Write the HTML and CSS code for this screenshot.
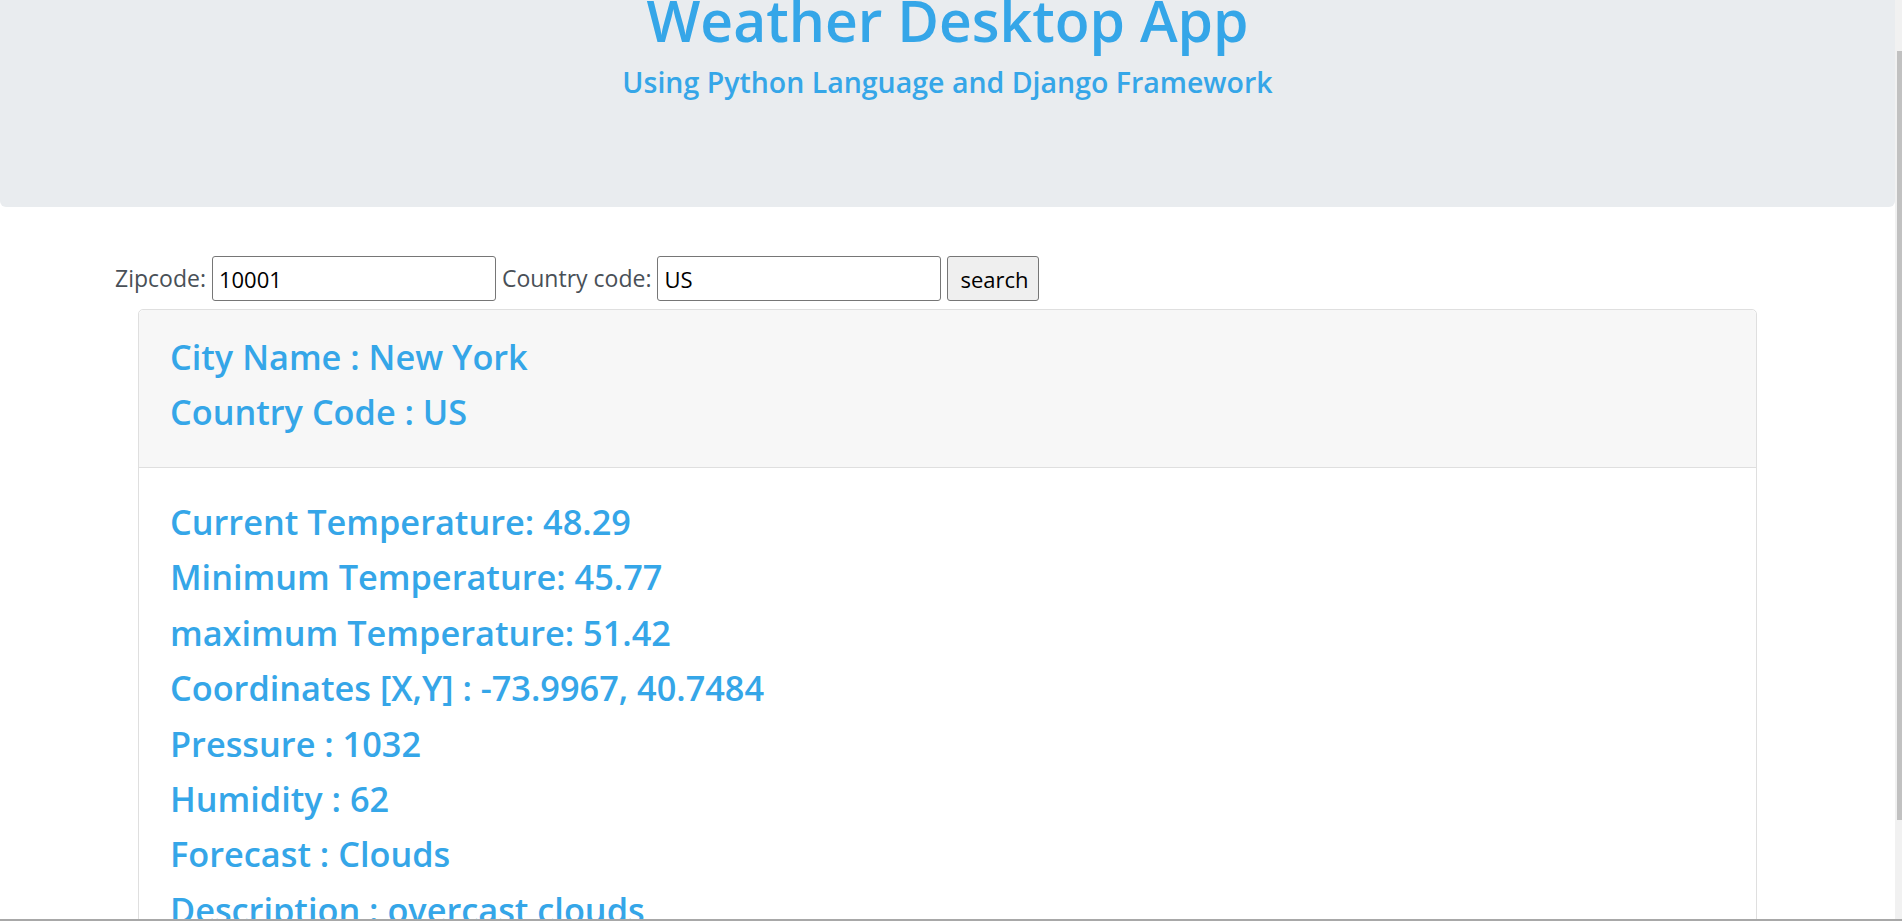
FILE: index.html
```html
<!DOCTYPE html>
<html lang="en">
<head>
<meta charset="utf-8">
<title>Weather Desktop App</title>
<link rel="stylesheet" href="styles.css">
</head>
<body>
<div class="page">
  <header class="jumbotron">
    <h1 class="title">Weather Desktop App</h1>
    <h2 class="subtitle">Using Python Language and Django Framework</h2>
  </header>

  <form class="search-form">
    <label class="form-label" for="zip">Zipcode:</label>
    <input class="form-input" id="zip" type="text" value="10001">
    <label class="form-label" for="cc">Country code:</label>
    <input class="form-input" id="cc" type="text" value="US">
    <button class="form-button" type="button">search</button>
  </form>

  <section class="card">
    <div class="card-header">
      <h3 class="line">City Name : New York</h3>
      <h3 class="line">Country Code : US</h3>
    </div>
    <div class="card-body">
      <h3 class="line">Current Temperature: 48.29</h3>
      <h3 class="line">Minimum Temperature: 45.77</h3>
      <h3 class="line">maximum Temperature: 51.42</h3>
      <h3 class="line">Coordinates [X,Y] : -73.9967, 40.7484</h3>
      <h3 class="line">Pressure : 1032</h3>
      <h3 class="line">Humidity : 62</h3>
      <h3 class="line">Forecast : Clouds</h3>
      <h3 class="line">Description : overcast clouds</h3>
    </div>
  </section>
</div>

<div class="scrollbar"><div class="scrollbar-thumb"></div></div>
<div class="window-edge"></div>
</body>
</html>
```

FILE: styles.css
```css
html, body {
  margin: 0;
  padding: 0;
  background: #ffffff;
  overflow: hidden;
}

body {
  font-family: "Open Sans", "Noto Sans", sans-serif;
  color: #495057;
}

.page {
  width: 1895px;
}

.jumbotron {
  background: #e9ecef;
  border-radius: 0 0 6px 6px;
  padding: 0 0 109px;
  text-align: center;
  color: #35a6e8;
}

.title {
  margin: -16px 0 0;
  font-size: 57px;
  line-height: 72px;
  font-weight: 600;
}

.subtitle {
  margin: 10px 0 0;
  font-size: 28.5px;
  line-height: 32px;
  font-weight: 600;
}

.search-form {
  display: flex;
  align-items: center;
  gap: 6px;
  margin: 49px 0 0 115px;
  height: 45px;
}

.form-label {
  font-size: 23px;
  line-height: 45px;
  color: #495057;
}

.form-input {
  box-sizing: border-box;
  width: 284px;
  height: 45px;
  border: 1px solid #767676;
  border-radius: 3px;
  padding: 0 6px;
  font-family: "Open Sans", "Noto Sans", sans-serif;
  font-size: 22px;
  color: #000000;
  background: #ffffff;
}

.form-button {
  box-sizing: border-box;
  width: 92px;
  height: 45px;
  border: 1px solid #767676;
  border-radius: 3px;
  padding: 0 12px;
  font-family: "Open Sans", "Noto Sans", sans-serif;
  font-size: 22px;
  color: #000000;
  background: #efefef;
}

.card {
  margin: 8px 138px 0;
  border: 1px solid #dfdfdf;
  border-radius: 5px;
  background: #ffffff;
}

.card-header {
  background: #f7f7f7;
  border-bottom: 1px solid #dfdfdf;
  border-radius: 5px 5px 0 0;
  padding: 19px 31px 28px;
}

.card-body {
  padding: 26px 31px 40px;
}

.line {
  margin: 0;
  font-size: 34.3px;
  line-height: 55.4px;
  font-weight: 600;
  color: #35a6e8;
}

.card-header .line {
  line-height: 55px;
}

.scrollbar {
  position: fixed;
  top: 0;
  right: 0;
  width: 7px;
  height: 921px;
  background: #f1f1f1;
}

.scrollbar-thumb {
  position: absolute;
  top: 51px;
  right: 0;
  width: 5px;
  height: 769px;
  background: #c1c1c1;
}

.window-edge {
  position: fixed;
  left: 0;
  right: 0;
  bottom: 0;
  height: 2px;
  background: #a8a8a8;
}
```
